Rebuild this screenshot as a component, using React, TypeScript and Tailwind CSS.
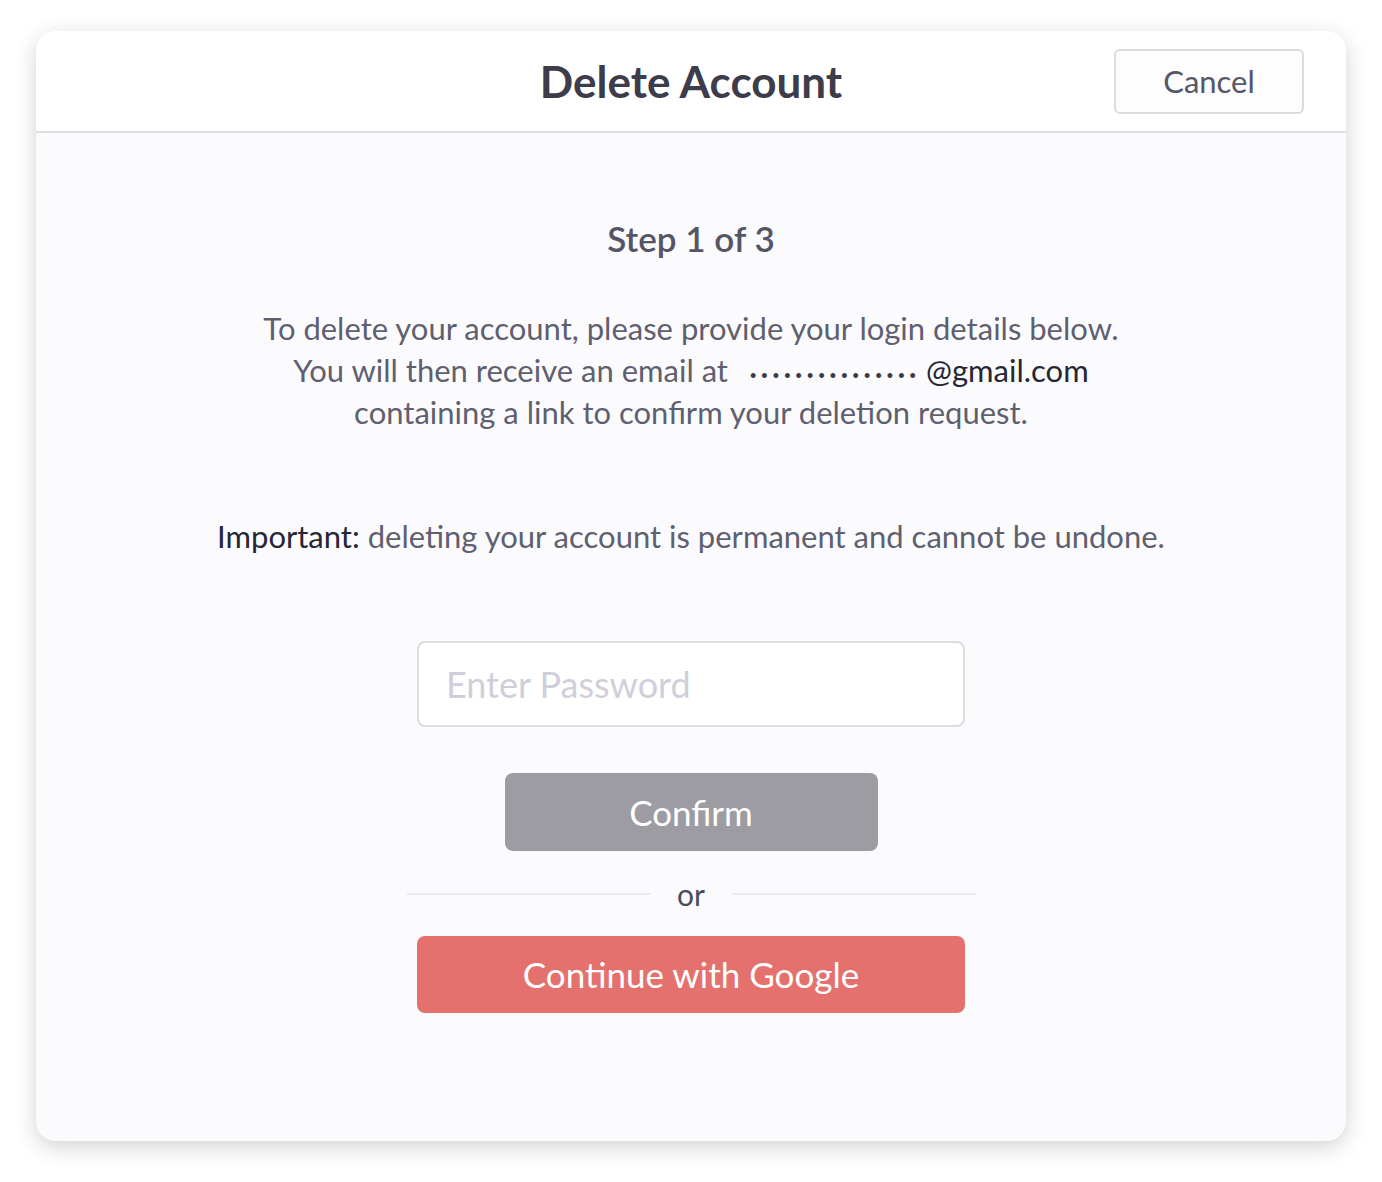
import React from "react";

const font = { fontFamily: "Lato, 'Open Sans', sans-serif" };

export default function App() {
  return (
    <div className="min-h-screen bg-white pt-[31px] pl-[36px]" style={font}>
      <div className="w-[1310px] h-[1110px] rounded-[20px] bg-[#fbfbfd] shadow-[0_6px_22px_rgba(0,0,0,0.18)] overflow-hidden flex flex-col">
        {/* Header */}
        <div className="h-[102px] shrink-0 bg-white border-b-2 border-[#dcdce3] grid grid-cols-[1fr_auto_1fr] items-center">
          <div />
          <h1 className="text-[44px] leading-[50px] font-bold text-[#3c3c4a]">Delete Account</h1>
          <div className="flex justify-end pr-[42px]">
            <button className="w-[190px] h-[65px] rounded-[6px] border-2 border-[#dadadf] bg-[#fdfdfd] text-[31px] text-[#565668]">
              Cancel
            </button>
          </div>
        </div>

        {/* Body */}
        <div className="flex flex-col items-center pt-[85px] text-center">
          <h2 className="text-[35px] leading-[40px] font-semibold text-[#555565]">Step 1 of 3</h2>

          <p className="mt-[49px] text-[31px] leading-[42px] text-[#5f5f70]">
            To delete your account, please provide your login details below.
            <br />
            You will then receive an email at
            <span
              className="ml-[22px] mr-[5px] text-[18px] leading-none tracking-[5.1px] text-[#3a3a48]"
              style={{ fontFamily: "'Liberation Sans', sans-serif" }}
            >
              •••••••••••••••
            </span>
            <span className="text-[#262635]">@gmail.com</span>
            <br />
            containing a link to confirm your deletion request.
          </p>

          <p className="mt-[82px] text-[31px] leading-[42px] text-[#5f5f70]">
            <span className="text-[#262635]">Important:</span> deleting your account is permanent and cannot be undone.
          </p>

          <input
            type="password"
            placeholder="Enter Password"
            className="mt-[84px] w-[548px] h-[86px] rounded-[8px] border-2 border-[#dcdce1] bg-white px-[27px] text-[36px] text-[#3c3c4a] placeholder:text-[#cfcfdb] outline-none"
            style={font}
          />

          <button className="mt-[46px] w-[373px] h-[78px] rounded-[8px] bg-[#9d9ca3] text-white text-[35px]">
            Confirm
          </button>

          <div className="mt-[25px] w-[569px] flex items-center">
            <div className="flex-1 h-[2px] bg-[#ebebf0]" />
            <span className="w-[81px] text-[30px] leading-[36px] text-[#4a4a5a]">or</span>
            <div className="flex-1 h-[2px] bg-[#ebebf0]" />
          </div>

          <button className="mt-[24px] w-[548px] h-[77px] rounded-[8px] bg-[#e4716d] text-white text-[35px]">
            Continue with Google
          </button>
        </div>
      </div>
    </div>
  );
}
